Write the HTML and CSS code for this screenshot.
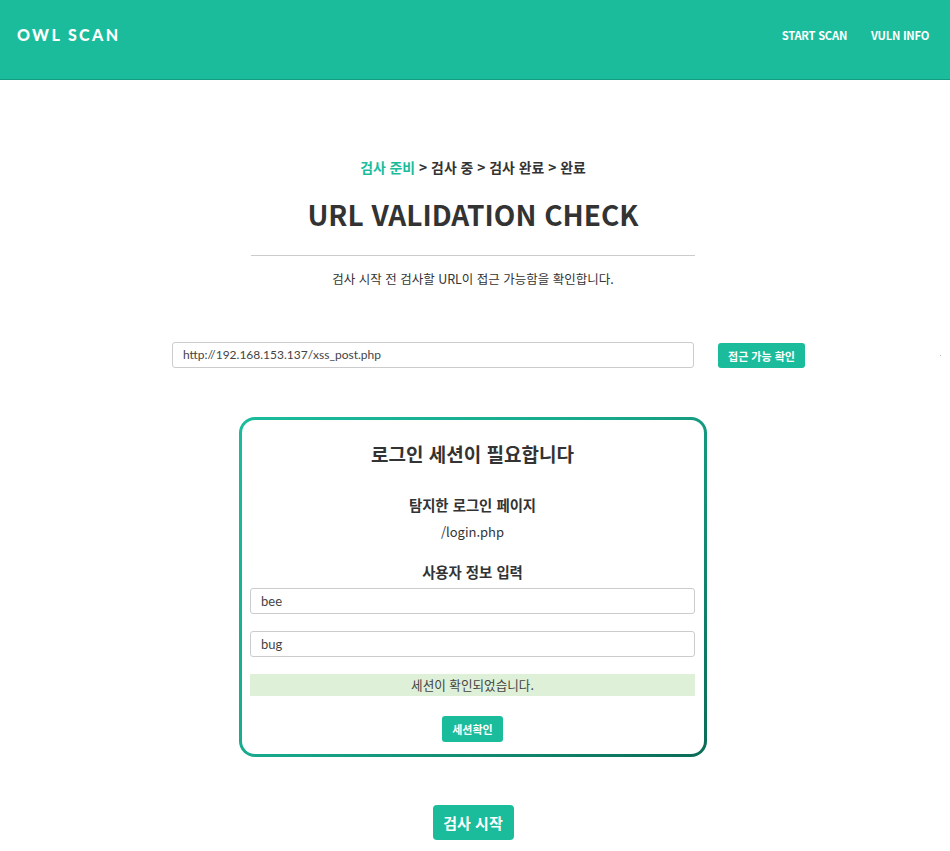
FILE: index.html
```html
<!DOCTYPE html>
<html lang="ko">
<head>
<meta charset="utf-8">
<title>OWL SCAN</title>
<link rel="stylesheet" href="styles.css">
</head>
<body>
<header class="topbar">
  <div class="logo">OWL SCAN</div>
  <nav class="nav">
    <a class="nav-item">START SCAN</a>
    <a class="nav-item">VULN INFO</a>
  </nav>
</header>
<main class="main">
  <div class="steps"><span class="step-on">검사 준비</span> &gt; 검사 중 &gt; 검사 완료 &gt; 완료</div>
  <h1 class="title">URL VALIDATION CHECK</h1>
  <div class="rule"></div>
  <p class="subtitle">검사 시작 전 검사할 URL이 접근 가능함을 확인합니다.</p>
  <div class="url-row">
    <div class="field url-field">http://192.168.153.137/xss_post.php</div>
    <button class="btn btn-small">접근 가능 확인</button>
    <span class="dot"></span>
  </div>
  <section class="card">
    <h2 class="card-title">로그인 세션이 필요합니다</h2>
    <h3 class="card-sub">탐지한 로그인 페이지</h3>
    <div class="login-path">/login.php</div>
    <h3 class="card-sub card-sub2">사용자 정보 입력</h3>
    <div class="field card-field">bee</div>
    <div class="field card-field card-field2">bug</div>
    <div class="success">세션이 확인되었습니다.</div>
    <div class="center"><button class="btn btn-small btn-session">세션확인</button></div>
  </section>
  <div class="center"><button class="btn btn-start">검사 시작</button></div>
</main>
</body>
</html>
```
FILE: styles.css
```css
* { box-sizing: border-box; }
body {
  margin: 0;
  background: #fff;
  color: #333;
  font-family: "Noto Sans CJK KR", "Noto Sans", sans-serif;
}
.topbar {
  height: 80px;
  background: #1abc9c;
  border-bottom: 1px solid #149c80;
  display: flex;
  align-items: center;
  justify-content: space-between;
  padding: 0 21px 10px 17px;
}
.logo {
  font-family: Lato, sans-serif;
  font-weight: 900;
  font-size: 16px;
  letter-spacing: 2.4px;
  color: #fff;
}
.nav { display: flex; gap: 24px; }
.nav-item {
  font-family: "Noto Sans CJK KR", sans-serif;
  font-weight: 700;
  font-size: 11.2px;
  color: #fff;
  letter-spacing: -0.25px;
}
.main { padding-right: 4px; }
.steps {
  margin-top: 77px;
  text-align: center;
  font-size: 13.9px;
  line-height: 20px;
  font-weight: 700;
  color: #333;
}
.step-on { color: #1abc9c; }
.title {
  margin: 18px 0 0;
  text-align: center;
  font-size: 28px;
  line-height: 38px;
  font-weight: 700;
  color: #333;
}
.rule {
  width: 444px;
  height: 1px;
  background: #ccc;
  margin: 22px auto 0;
}
.subtitle {
  margin: 13px 0 0;
  text-align: center;
  font-size: 12.5px;
  line-height: 20px;
  color: #333;
}
.url-row {
  margin: 53px 0 0 172px;
  display: flex;
  align-items: center;
}
.field {
  height: 26px;
  border: 1px solid #ccc;
  border-radius: 3px;
  background: #fff;
  font-family: Lato, sans-serif;
  font-size: 13px;
  line-height: 24px;
  color: #444;
  padding: 0 10px;
}
.url-field { width: 522px; font-size: 12px; }
.btn {
  border: 0;
  background: #1abc9c;
  color: #fff;
  font-family: "Noto Sans CJK KR", sans-serif;
  font-weight: 700;
  border-radius: 3px;
  padding: 0;
  cursor: pointer;
}
.btn-small {
  height: 26px;
  font-size: 11px;
  line-height: 26px;
}
.url-row .btn-small { width: 87px; margin-left: 24px; height: 25px; }
.dot {
  width: 1px; height: 1px;
  background: #bbb;
  margin-left: 135px;
}
.card {
  width: 468px;
  margin: 49px auto 0;
  border: 3px solid transparent;
  border-radius: 16px;
  background:
    linear-gradient(#fff, #fff) padding-box,
    linear-gradient(135deg, #1abc9c 0%, #18a98c 45%, #0b6b56 100%) border-box;
  padding: 20px 9px 12px 8px;
}
.card-title {
  margin: 0;
  text-align: center;
  font-size: 19px;
  line-height: 28px;
  font-weight: 700;
  color: #333;
}
.card-sub {
  margin: 26px 0 0;
  text-align: center;
  font-size: 14.4px;
  line-height: 22px;
  font-weight: 700;
  color: #333;
}
.card-sub2 { margin-top: 18px; }
.login-path {
  margin-top: 5px;
  text-align: center;
  font-size: 13px;
  line-height: 22px;
  color: #333;
}
.card-field { margin-top: 5px; }
.card-field2 { margin-top: 17px; }
.success {
  margin-top: 17px;
  height: 22px;
  background: #dff0d8;
  text-align: center;
  font-size: 12.6px;
  line-height: 22px;
  color: #444;
}
.center { display: flex; justify-content: center; }
.btn-session { width: 61px; margin-top: 20px; }
.btn-start {
  margin-top: 48px;
  width: 81px;
  height: 35px;
  font-size: 15px;
  border-radius: 4px;
}
```
